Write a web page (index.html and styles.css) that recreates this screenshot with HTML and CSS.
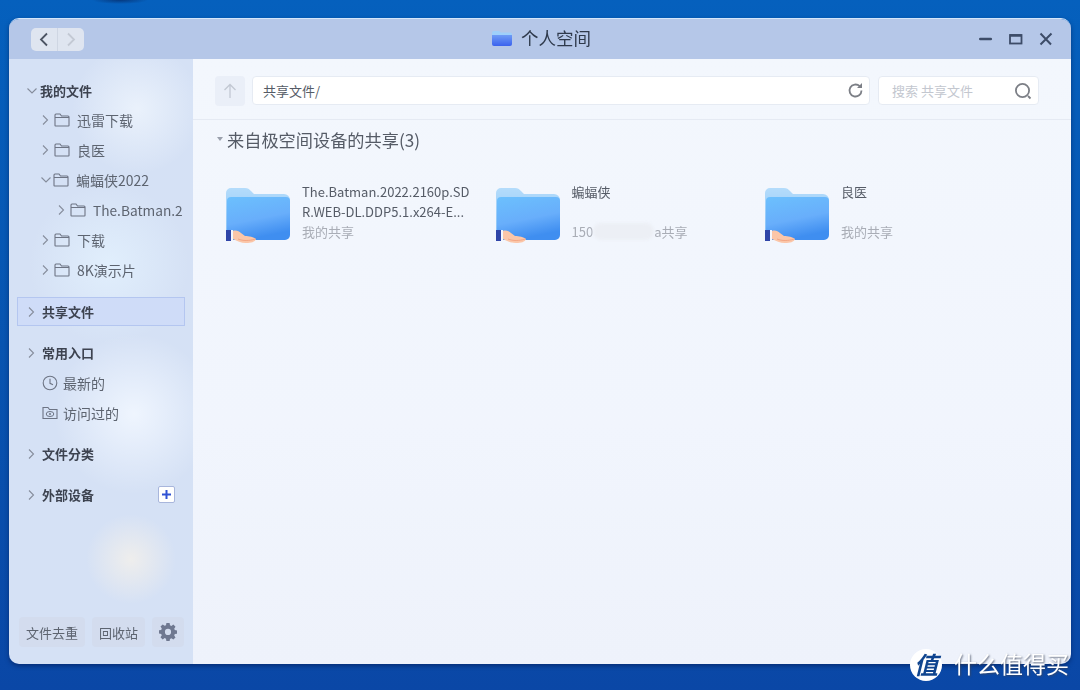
FILE: index.html
```html
<!DOCTYPE html>
<html lang="zh">
<head>
    <meta charset="UTF-8">
    <title>个人空间</title>
    <link rel="stylesheet" href="styles.css">
</head>
<body>
    <svg class="defs" width="0" height="0">
        <defs>
            <linearGradient id="folderBack" x1="0" y1="0" x2="0" y2="1">
                <stop offset="0" stop-color="#b4dcfb"/>
                <stop offset="1" stop-color="#8cc4f8"/>
            </linearGradient>
            <linearGradient id="folderFront" x1="0" y1="0" x2="0.3" y2="1">
                <stop offset="0" stop-color="#6cc0fd"/>
                <stop offset="0.6" stop-color="#68aefb"/>
                <stop offset="1" stop-color="#3f8ef0"/>
            </linearGradient>
            <symbol id="share-folder" viewBox="0 0 64 56">
                <path d="M0 6a5 5 0 0 1 5-5h14c3 0 4 1 6 3l3 3h30a6 6 0 0 1 6 6v30H0z" fill="url(#folderBack)"/>
                <path d="M1 14a4 4 0 0 1 4-4h55a4 4 0 0 1 4 4v34a5 5 0 0 1-5 5H3a2 2 0 0 1-2-2z" fill="url(#folderFront)"/>
                <rect x="0" y="43" width="5" height="11" fill="#2f45a8"/>
                <rect x="5" y="43" width="2" height="11" fill="#f4f6fc"/>
                <path d="M7 44c3-1 6 0 8 2l4 3c4 0 9 1 11 3-1 3-5 4-10 4-5 0-9-2-13-4z" fill="#fbc6a8"/>
                <path d="M12 52c5 2 11 2 17 0" stroke="#f3a684" stroke-width="1" fill="none"/>
            </symbol>
            <symbol id="tree-folder" viewBox="0 0 16 14">
                <path d="M1 12.500V2a1 1 0 0 1 1-1h4l1.500 2H14a1 1 0 0 1 1 1v8.500a.5.5 0 0 1-.5.5h-13a.5.5 0 0 1-.5-.5zM1 4.500h14" fill="none" stroke="#6d7484" stroke-width="1.100"/>
            </symbol>
            <symbol id="arrow-right" viewBox="0 0 8 12">
                <path d="M2 1.500 6.500 6 2 10.500" fill="none" stroke="#868d9c" stroke-width="1.100"/>
            </symbol>
            <symbol id="arrow-down" viewBox="0 0 12 8">
                <path d="M1.500 1.500 6 6l4.500-4.500" fill="none" stroke="#868d9c" stroke-width="1.100"/>
            </symbol>
        </defs>
    </svg>

    <div class="window">
        <header class="titlebar">
            <div class="nav-btns">
                <span class="nav-btn">
                    <svg width="10" height="15" viewBox="0 0 10 15"><path d="M8 1.500 2 7.500l6 6" fill="none" stroke="#4d5564" stroke-width="1.800"/></svg>
                </span>
                <span class="nav-btn">
                    <svg width="10" height="15" viewBox="0 0 10 15"><path d="M2 1.500l6 6-6 6" fill="none" stroke="#c3c9d4" stroke-width="1.800"/></svg>
                </span>
            </div>
            <div class="title">
                <svg width="20" height="16" viewBox="0 0 20 16">
                    <defs>
                        <linearGradient id="titleFolder" x1="0" y1="0" x2="0" y2="1">
                            <stop offset="0" stop-color="#6f9cf5"/>
                            <stop offset="1" stop-color="#3b62ee"/>
                        </linearGradient>
                    </defs>
                    <path d="M0 3a2 2 0 0 1 2-2h5l2 1.500h9a2 2 0 0 1 2 2V8H0z" fill="#9fd0fa"/>
                    <path d="M0 5h20v9a2 2 0 0 1-2 2H2a2 2 0 0 1-2-2z" fill="url(#titleFolder)"/>
                </svg>
                <span>个人空间</span>
            </div>
            <div class="win-ctrls">
                <svg width="14" height="14" viewBox="0 0 14 14"><path d="M1.300 7h10.500" stroke="#3d4c68" stroke-width="2.600" stroke-linecap="round"/></svg>
                <svg width="14" height="14" viewBox="0 0 14 14"><rect x="1" y="3" width="11.500" height="8.500" fill="none" stroke="#3d4c68" stroke-width="1.800"/><path d="M1 3.500h11.500" stroke="#3d4c68" stroke-width="2.400"/></svg>
                <svg width="14" height="14" viewBox="0 0 14 14"><path d="M1.500 1.500l10.500 11M12.500 1.500 1.500 12.500" stroke="#3d4c68" stroke-width="2"/></svg>
            </div>
        </header>

        <div class="body">
            <aside class="sidebar">
                <div class="tree-head">
                    <svg class="arrow" width="12" height="8"><use href="#arrow-down"/></svg>
                    <span>我的文件</span>
                </div>
                <ul class="tree">
                    <li class="tree-item"><svg class="arrow-s" width="8" height="12"><use href="#arrow-right"/></svg><svg width="16" height="14"><use href="#tree-folder"/></svg><span>迅雷下载</span></li>
                    <li class="tree-item"><svg class="arrow-s" width="8" height="12"><use href="#arrow-right"/></svg><svg width="16" height="14"><use href="#tree-folder"/></svg><span>良医</span></li>
                    <li class="tree-item open"><svg class="arrow-d" width="12" height="8"><use href="#arrow-down"/></svg><svg width="16" height="14"><use href="#tree-folder"/></svg><span>蝙蝠侠2022</span></li>
                    <li class="tree-item sub"><svg class="arrow-s" width="8" height="12"><use href="#arrow-right"/></svg><svg width="16" height="14"><use href="#tree-folder"/></svg><span>The.Batman.2</span></li>
                    <li class="tree-item"><svg class="arrow-s" width="8" height="12"><use href="#arrow-right"/></svg><svg width="16" height="14"><use href="#tree-folder"/></svg><span>下载</span></li>
                    <li class="tree-item"><svg class="arrow-s" width="8" height="12"><use href="#arrow-right"/></svg><svg width="16" height="14"><use href="#tree-folder"/></svg><span>8K演示片</span></li>
                </ul>

                <div class="group-head selected"><svg width="8" height="12"><use href="#arrow-right"/></svg><span>共享文件</span></div>

                <div class="group-head entry"><svg width="8" height="12"><use href="#arrow-right"/></svg><span>常用入口</span></div>
                <div class="link-item">
                    <svg width="16" height="16" viewBox="0 0 16 16"><circle cx="8" cy="8" r="6.800" fill="none" stroke="#6d7484" stroke-width="1.100"/><path d="M8 3.800V8.300l3 1.500" fill="none" stroke="#6d7484" stroke-width="1.100"/></svg>
                    <span>最新的</span>
                </div>
                <div class="link-item">
                    <svg width="16" height="14" viewBox="0 0 16 14"><path d="M1 12.500V1.500h5l1.500 2H15v9z" fill="none" stroke="#6d7484" stroke-width="1.100"/><ellipse cx="8" cy="8" rx="3.800" ry="2.500" fill="none" stroke="#6d7484"/><circle cx="8" cy="8" r="1" fill="#6d7484"/></svg>
                    <span>访问过的</span>
                </div>
                <div class="group-head category"><svg width="8" height="12"><use href="#arrow-right"/></svg><span>文件分类</span></div>
                <div class="group-head device">
                    <svg width="8" height="12"><use href="#arrow-right"/></svg><span>外部设备</span>
                    <span class="add-btn"><svg width="9" height="9" viewBox="0 0 9 9"><path d="M4.500 0v9M0 4.500h9" stroke="#2f52d4" stroke-width="2"/></svg></span>
                </div>

                <div class="side-tools">
                    <button class="tool-btn dedupe">文件去重</button>
                    <button class="tool-btn trash">回收站</button>
                    <button class="tool-btn gear">
                        <svg width="18" height="18" viewBox="0 0 18 18"><path fill-rule="evenodd" fill="#6f7890" d="M7.400 0h3.200l.4 2.300 1.400.6 1.900-1.300 2.200 2.200-1.300 1.900.6 1.400 2.200.4v3.200l-2.200.4-.6 1.400 1.300 1.900-2.200 2.200-1.900-1.300-1.400.6-.4 2.300H7.400L7 15.700l-1.400-.6-1.900 1.300-2.200-2.200 1.300-1.900-.6-1.400L0 10.500V7.300l2.200-.4.6-1.400L1.500 3.600l2.200-2.200 1.900 1.300L7 2.300zM9 5.800a3.100 3.100 0 1 0 0 6.200 3.100 3.100 0 0 0 0-6.200z"/></svg>
                    </button>
                </div>
            </aside>

            <main class="main">
                <div class="toolbar">
                    <span class="up-btn">
                        <svg width="14" height="16" viewBox="0 0 14 16"><path d="M7 15V1.500M1.500 7 7 1.500 12.500 7" fill="none" stroke="#c2c8d3" stroke-width="1.300"/></svg>
                    </span>
                    <div class="path-box">
                        <span>共享文件/</span>
                        <svg width="17" height="17" viewBox="0 0 17 17"><path d="M14.500 8.500a6 6 0 1 1-1.800-4.300" fill="none" stroke="#7c7f86" stroke-width="1.800"/><path d="M15 1v5h-5z" fill="#7c7f86"/></svg>
                    </div>
                    <div class="search-box">
                        <span>搜索 共享文件</span>
                        <svg width="18" height="18" viewBox="0 0 18 18"><circle cx="8.500" cy="8.500" r="6.600" fill="none" stroke="#7c7f86" stroke-width="1.800"/><path d="M14 14l2.500 2.500" stroke="#7c7f86" stroke-width="1.800"/></svg>
                    </div>
                </div>

                <h2 class="section-title"><i class="caret"></i>来自极空间设备的共享(3)</h2>

                <div class="cards">
                    <div class="card">
                        <svg class="card-icon" width="64" height="56"><use href="#share-folder"/></svg>
                        <div class="card-text">
                            <div class="card-name">The.Batman.2022.2160p.SDR.WEB-DL.DDP5.1.x264-E...</div>
                            <div class="card-sub">我的共享</div>
                        </div>
                    </div>
                    <div class="card">
                        <svg class="card-icon" width="64" height="56"><use href="#share-folder"/></svg>
                        <div class="card-text">
                            <div class="card-name">蝙蝠侠</div>
                            <div class="card-sub">150<i class="smudge"></i>a共享</div>
                        </div>
                    </div>
                    <div class="card">
                        <svg class="card-icon" width="64" height="56"><use href="#share-folder"/></svg>
                        <div class="card-text">
                            <div class="card-name">良医</div>
                            <div class="card-sub">我的共享</div>
                        </div>
                    </div>
                </div>
            </main>
        </div>
    </div>

    <div class="watermark">
        <span class="wm-logo">值</span>
        <span class="wm-text">什么值得买</span>
    </div>
</body>
</html>
```

FILE: styles.css
```css
* {
    box-sizing: border-box;
}
html, body {
    height: 100%;
}
body {
    margin: 0;
    padding: 18px 9px 26px;
    overflow: hidden;
    font-family: "Noto Sans CJK SC", "Noto Sans", sans-serif;
    color: #4a4f5a;
    background:
        radial-gradient(ellipse 28px 4px at 120px 0, rgba(6, 40, 100, 0.7), transparent),
        linear-gradient(180deg, #0560bd 0%, #0854b0 50%, #0a47a6 100%);
}
.defs {
    display: block;
    height: 0;
}
.window {
    height: 646px;
    display: flex;
    flex-direction: column;
    border-radius: 10px;
    overflow: hidden;
    border-top: 1px solid #d3e6fa;
    box-shadow: 0 2px 4px rgba(0, 20, 70, 0.5);
    filter: blur(0.35px);
}

/* title bar */
.titlebar {
    height: 40px;
    flex: none;
    display: flex;
    align-items: center;
    padding: 0 18px 0 22px;
    background: #b5c7e8;
}
.nav-btns {
    display: flex;
    width: 53px;
    height: 23px;
    border-radius: 5px;
    background: #dfe5f0;
}
.nav-btn {
    flex: 1;
    display: flex;
    align-items: center;
    justify-content: center;
}
.nav-btn + .nav-btn {
    border-left: 1px solid #cfd6e3;
}
.title {
    flex: 1;
    display: flex;
    align-items: center;
    justify-content: center;
    gap: 9px;
    padding: 0 0 3px 28px;
    font-size: 17.5px;
    color: #2f3a4c;
}
.win-ctrls {
    display: flex;
    align-items: center;
    gap: 16px;
    width: 82px;
    justify-content: flex-end;
}

.body {
    flex: 1;
    display: flex;
    min-height: 0;
}

/* sidebar */
.sidebar {
    width: 184px;
    flex: none;
    display: flex;
    flex-direction: column;
    padding: 17px 8px 17px;
    background:
        radial-gradient(circle at 128px 50px, rgba(236, 243, 252, 0.9), transparent 65px),
        radial-gradient(circle at 100px 205px, rgba(226, 240, 253, 0.9), transparent 80px),
        radial-gradient(circle at 125px 355px, rgba(240, 246, 255, 0.95), transparent 80px),
        radial-gradient(circle at 122px 500px, rgba(243, 240, 235, 0.85), transparent 45px),
        #d5e1f5;
    font-size: 14px;
    color: #5d6470;
}
.tree-head {
    height: 29px;
    display: flex;
    align-items: center;
    padding-left: 9px;
    gap: 2px;
    font-size: 13px;
    font-weight: 700;
    color: #3d4350;
}
.tree {
    list-style: none;
    margin: 0;
    padding: 0;
}
.tree-item {
    height: 30px;
    display: flex;
    align-items: center;
    white-space: nowrap;
    padding-left: 24px;
}
.tree-item span {
    margin-left: 7px;
}
.tree-item .arrow-s {
    margin-right: 5px;
}
.tree-item .arrow-d {
    margin: 0 1px 0 -1px;
}
.tree-item.sub {
    padding-left: 40px;
    font-size: 13.7px;
}
.group-head {
    height: 29px;
    display: flex;
    align-items: center;
    gap: 7px;
    padding-left: 10px;
    font-size: 13px;
    font-weight: 700;
    color: #3d4350;
}
.group-head.selected {
    margin-top: 12px;
    background: #cfdcf8;
    border: 1px solid #b4c6f0;
    padding-left: 9px;
}
.group-head.entry {
    margin-top: 12px;
}
.group-head.category {
    margin-top: 11px;
}
.group-head.device {
    margin-top: 12px;
}
.add-btn {
    margin-left: auto;
    margin-right: 10px;
    width: 17px;
    height: 17px;
    display: flex;
    align-items: center;
    justify-content: center;
    background: #fff;
    border: 1px solid #a8b6dc;
    border-radius: 2px;
}
.link-item {
    height: 30px;
    display: flex;
    align-items: center;
    gap: 5px;
    padding-left: 25px;
}
.group-head.entry + .link-item {
    margin-top: 1px;
}
.side-tools {
    margin-top: auto;
    display: flex;
    gap: 7px;
    padding-left: 2px;
}
.tool-btn {
    height: 30px;
    padding: 0;
    border: none;
    border-radius: 4px;
    background: #d3dcee;
    font: inherit;
    font-size: 13px;
    color: #5d6470;
    display: flex;
    align-items: center;
    justify-content: center;
}
.tool-btn.dedupe {
    width: 66px;
}
.tool-btn.trash {
    width: 53px;
}
.tool-btn.gear {
    width: 32px;
}

/* main pane */
.main {
    flex: 1;
    min-width: 0;
    background: linear-gradient(180deg, #f3f7fd 0%, #f1f5fd 60%, #eef2fb 100%);
}
.toolbar {
    height: 61px;
    display: flex;
    align-items: flex-start;
    padding: 17px 32px 0 22px;
    border-bottom: 1px solid #e5eaf3;
}
.up-btn {
    width: 30px;
    height: 30px;
    display: flex;
    align-items: center;
    justify-content: center;
    border-radius: 4px;
    background: #eaeff8;
    margin-right: 7px;
}
.path-box,
.search-box {
    height: 29px;
    display: flex;
    align-items: center;
    justify-content: space-between;
    background: #fff;
    border: 1px solid #e6ebf3;
    border-radius: 4px;
    font-size: 13px;
}
.path-box {
    width: 618px;
    padding: 0 5px 0 10px;
    color: #555b66;
}
.search-box {
    width: 161px;
    margin-left: 8px;
    padding: 0 6px 0 13px;
    color: #c3c7cf;
}
.section-title {
    margin: 0;
    height: 42px;
    display: flex;
    align-items: center;
    padding: 0 0 4px 24px;
    font-size: 17.2px;
    font-weight: 400;
    color: #555b66;
}
.caret {
    width: 0;
    height: 0;
    margin-right: 4px;
    border-left: 3.500px solid transparent;
    border-right: 3.500px solid transparent;
    border-top: 4px solid #9aa0ac;
}
.cards {
    display: grid;
    grid-template-columns: 269.500px 269.500px 1fr;
    padding: 25px 0 0 33px;
}
.card {
    display: flex;
    gap: 12px;
}
.card-icon {
    flex: none;
}
.card-text {
    width: 170px;
    height: 60px;
    display: flex;
    flex-direction: column;
}
.card-name {
    font-size: 13px;
    line-height: 20px;
    height: 40px;
    margin-top: -5px;
    word-break: break-all;
    color: #555b66;
}
.card-sub {
    font-size: 13px;
    line-height: 20px;
    color: #a9adb6;
}
.smudge {
    display: inline-block;
    width: 61px;
    height: 17px;
    vertical-align: -3px;
    border-radius: 9px;
    background: #eceff5;
    filter: blur(1.5px);
}

/* watermark over the corner */
.watermark {
    position: absolute;
    left: 910px;
    top: 649px;
    display: flex;
    align-items: center;
    gap: 12px;
    color: #fff;
}
.wm-logo {
    width: 32px;
    height: 32px;
    border-radius: 50%;
    background: #fff;
    color: #10458f;
    font-size: 24px;
    font-style: italic;
    font-weight: 700;
    line-height: 30px;
    text-align: center;
}
.wm-text {
    margin-top: -5px;
    font-size: 23px;
    line-height: 32px;
    text-shadow: 1px 1px 2px rgba(60, 70, 90, 0.75);
}
```
